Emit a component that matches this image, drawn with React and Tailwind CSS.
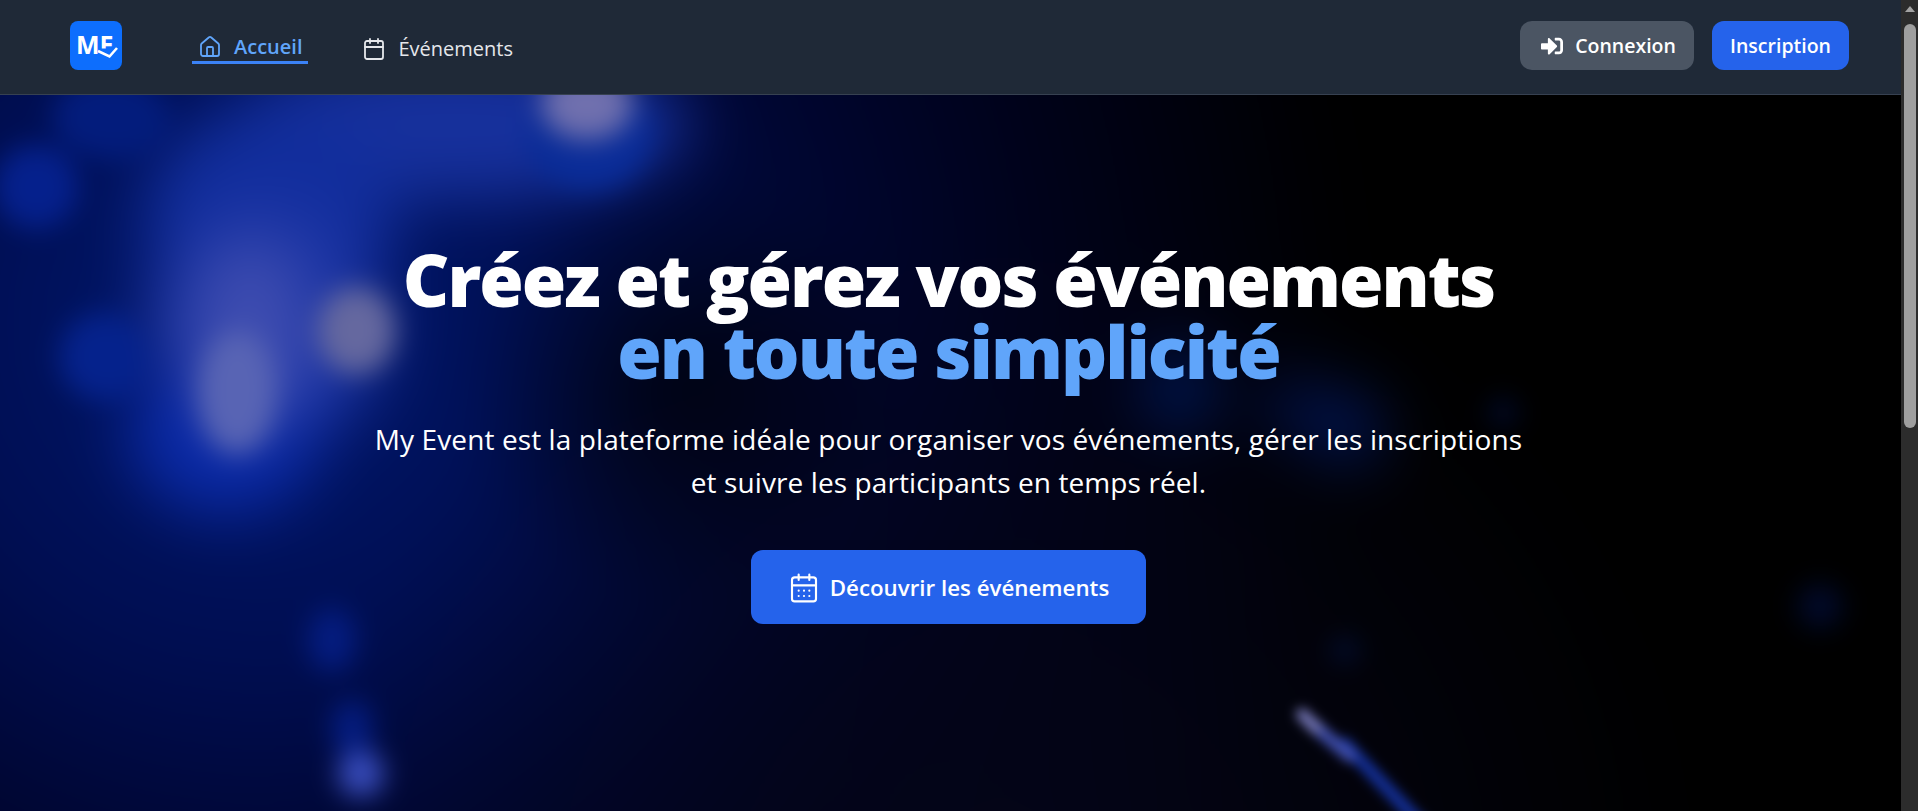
import { House, Calendar, CalendarDays } from "lucide-react";
import { FaSignInAlt } from "react-icons/fa";

const font = { fontFamily: '"Open Sans", "Noto Sans", sans-serif' };

// blurred photo behind the hero, coordinates are hero pixels (1901x717)
// layers are nested so each blur works on opaque pixels, keeps the glow smooth
const HeroBackdrop = () => (
  <svg
    className="absolute inset-0 w-full h-full"
    viewBox="0 0 1901 717"
    preserveAspectRatio="none"
  >
    <defs>
      <radialGradient id="navy" gradientUnits="userSpaceOnUse" cx="260" cy="230" r="1100">
        <stop offset="0" stopColor="#00186e" />
        <stop offset="0.3" stopColor="#000e52" />
        <stop offset="0.5" stopColor="#000632" />
        <stop offset="0.72" stopColor="#00021a" />
        <stop offset="1" stopColor="#000" />
      </radialGradient>
      <radialGradient id="bottom" gradientUnits="userSpaceOnUse" cx="1000" cy="800" r="700">
        <stop offset="0" stopColor="#040518" stopOpacity="1" />
        <stop offset="1" stopColor="#040518" stopOpacity="0" />
      </radialGradient>
      <radialGradient id="hole" gradientUnits="userSpaceOnUse" cx="680" cy="290" r="220">
        <stop offset="0" stopColor="#000" stopOpacity="0.75" />
        <stop offset="1" stopColor="#000" stopOpacity="0" />
      </radialGradient>
      <filter id="b30" filterUnits="userSpaceOnUse" x="-100" y="-100" width="2101" height="917" colorInterpolationFilters="sRGB">
        <feGaussianBlur stdDeviation="30" />
      </filter>
      <filter id="b12" filterUnits="userSpaceOnUse" x="-100" y="-100" width="2101" height="917" colorInterpolationFilters="sRGB">
        <feGaussianBlur stdDeviation="12" />
      </filter>
      <filter id="b6" filterUnits="userSpaceOnUse" x="-100" y="-100" width="2101" height="917" colorInterpolationFilters="sRGB">
        <feGaussianBlur stdDeviation="6" />
      </filter>
    </defs>

    <g filter="url(#b6)">
      <g filter="url(#b12)">
        <g filter="url(#b30)">
          <rect x="-100" y="-100" width="2101" height="917" fill="#000" />
          <rect x="-100" y="-100" width="2101" height="917" fill="url(#navy)" />
          <rect x="-100" y="-100" width="2101" height="917" fill="url(#bottom)" />
          <rect x="-100" y="-100" width="2101" height="917" fill="url(#hole)" />
          <ellipse cx="460" cy="30" rx="230" ry="75" fill="#16309c" />
          <ellipse cx="270" cy="120" rx="125" ry="110" fill="#112d9c" />
          <ellipse cx="265" cy="230" rx="120" ry="125" fill="#1b34a4" />
          <ellipse cx="225" cy="340" rx="95" ry="80" fill="#0a2aa8" />
          <ellipse cx="250" cy="240" rx="60" ry="95" fill="#3f4db0" />
          <ellipse cx="1180" cy="295" rx="34" ry="38" fill="#001a60" />
          <ellipse cx="1295" cy="312" rx="26" ry="28" fill="#011456" />
          <ellipse cx="1348" cy="334" rx="30" ry="34" fill="#021a68" />
        </g>
        <circle cx="36" cy="92" r="42" fill="#05208c" />
        <ellipse cx="110" cy="22" rx="58" ry="42" fill="#031c7c" />
        <circle cx="103" cy="262" r="44" fill="#05228c" />
        <ellipse cx="590" cy="40" rx="64" ry="58" fill="#0a2c98" />
        <ellipse cx="237" cy="298" rx="40" ry="62" fill="#5864b4" />
        <ellipse cx="357" cy="236" rx="39" ry="44" fill="#65689f" />
        <ellipse cx="587" cy="9" rx="46" ry="36" fill="#7070ae" />
        <ellipse cx="332" cy="546" rx="24" ry="32" fill="#041c80" />
        <ellipse cx="352" cy="634" rx="21" ry="28" fill="#041c80" />
        <circle cx="361" cy="680" r="23" fill="#3a4ec0" />
        <circle cx="1345" cy="556" r="9" fill="#021a5c" />
        <circle cx="1820" cy="512" r="22" fill="#010a2c" />
        <circle cx="1503" cy="318" r="13" fill="#010c34" />
      </g>
      <g strokeLinecap="round" fill="none">
        <line x1="1345" y1="650" x2="1430" y2="740" stroke="#14309a" strokeWidth="13" />
        <line x1="1310" y1="628" x2="1350" y2="662" stroke="#3f4eac" strokeWidth="13" />
        <line x1="1302" y1="620" x2="1316" y2="634" stroke="#7678b8" strokeWidth="12" />
      </g>
    </g>
  </svg>
);

const Logo = () => (
  <div className="relative w-[52px] h-[49px] rounded-lg bg-[#0d6efd] flex items-center overflow-hidden pl-[6px] pb-[2px]">
    <span className="text-white font-bold text-[25px] leading-none">ME</span>
    <svg className="absolute inset-0 w-[52px] h-[49px]" viewBox="0 0 52 49" fill="none">
      <path d="M31 27.5 H50 V40 H31 Z" fill="#0d6efd" />
      <path d="M28 30 L39.5 35.5 L47 27" stroke="#fff" strokeWidth="2.6" />
    </svg>
  </div>
);

const Scrollbar = () => (
  <div className="w-[17px] h-full bg-[#2c2c2c] flex flex-col items-center shrink-0">
    <div className="h-[17px] flex items-center justify-center">
      <div className="w-0 h-0 border-x-[5px] border-x-transparent border-b-[6px] border-b-[#a3a3a3]" />
    </div>
    <div className="w-[12px] h-[404px] mt-[7px] rounded-full bg-[#9f9f9f]" />
  </div>
);

const App = () => {
  return (
    <div className="flex h-screen w-full overflow-hidden bg-black" style={font}>
      <div className="flex-1 flex flex-col min-w-0">
        {/* navbar */}
        <header className="h-[95px] shrink-0 bg-[#1f2937] border-b border-[#374151] flex items-center justify-between pl-[70px] pr-[52px] pb-[3px]">
          <div className="flex items-center">
            <Logo />
            <nav className="flex items-center ml-[70px] gap-[54px] mt-[6px]">
              <a className="flex items-center gap-[12px] pl-[6px] pr-[6px] h-[31px] border-b-[3px] border-[#3b82f6] text-[#60a5fa] text-[20px] font-semibold">
                <House className="w-[24px] h-[24px]" strokeWidth={1.8} />
                Accueil
              </a>
              <a className="flex items-center gap-[12px] h-[36px] text-[#e5e7eb] text-[20px] font-medium">
                <Calendar className="w-[24px] h-[24px]" strokeWidth={1.8} />
                Événements
              </a>
            </nav>
          </div>

          <div className="flex items-center gap-[18px]">
            <button className="h-[49px] w-[174px] rounded-xl bg-[#4b5563] text-white text-[19.5px] font-semibold flex items-center justify-center gap-[9px]">
              <FaSignInAlt className="w-[28px] h-[22px]" />
              Connexion
            </button>
            <button className="h-[49px] w-[137px] rounded-xl bg-[#2563eb] text-white text-[19.5px] font-semibold flex items-center justify-center">
              Inscription
            </button>
          </div>
        </header>

        {/* hero */}
        <main className="relative flex-1 overflow-hidden">
          <HeroBackdrop />
          <div className="relative flex flex-col items-center pt-[148px] pr-[4px] text-center">
            <h1 className="text-[72px] leading-[72px] font-black text-white tracking-[-2px]">
              Créez et gérez vos événements
              <br />
              <span className="text-[#60a5fa]">en toute simplicité</span>
            </h1>
            <p className="mt-[31px] text-[28px] leading-[43px] tracking-[0.1px] text-white">
              My Event est la plateforme idéale pour organiser vos événements, gérer les inscriptions
              <br />
              et suivre les participants en temps réel.
            </p>
            <button className="mt-[46px] h-[74px] w-[395px] rounded-xl bg-[#2563eb] text-white text-[22.3px] font-semibold flex items-center justify-center gap-[10px] pt-[2px]">
              <CalendarDays className="w-[32px] h-[32px]" strokeWidth={1.6} />
              Découvrir les événements
            </button>
          </div>
        </main>
      </div>
      <Scrollbar />
    </div>
  );
};

export default App;
